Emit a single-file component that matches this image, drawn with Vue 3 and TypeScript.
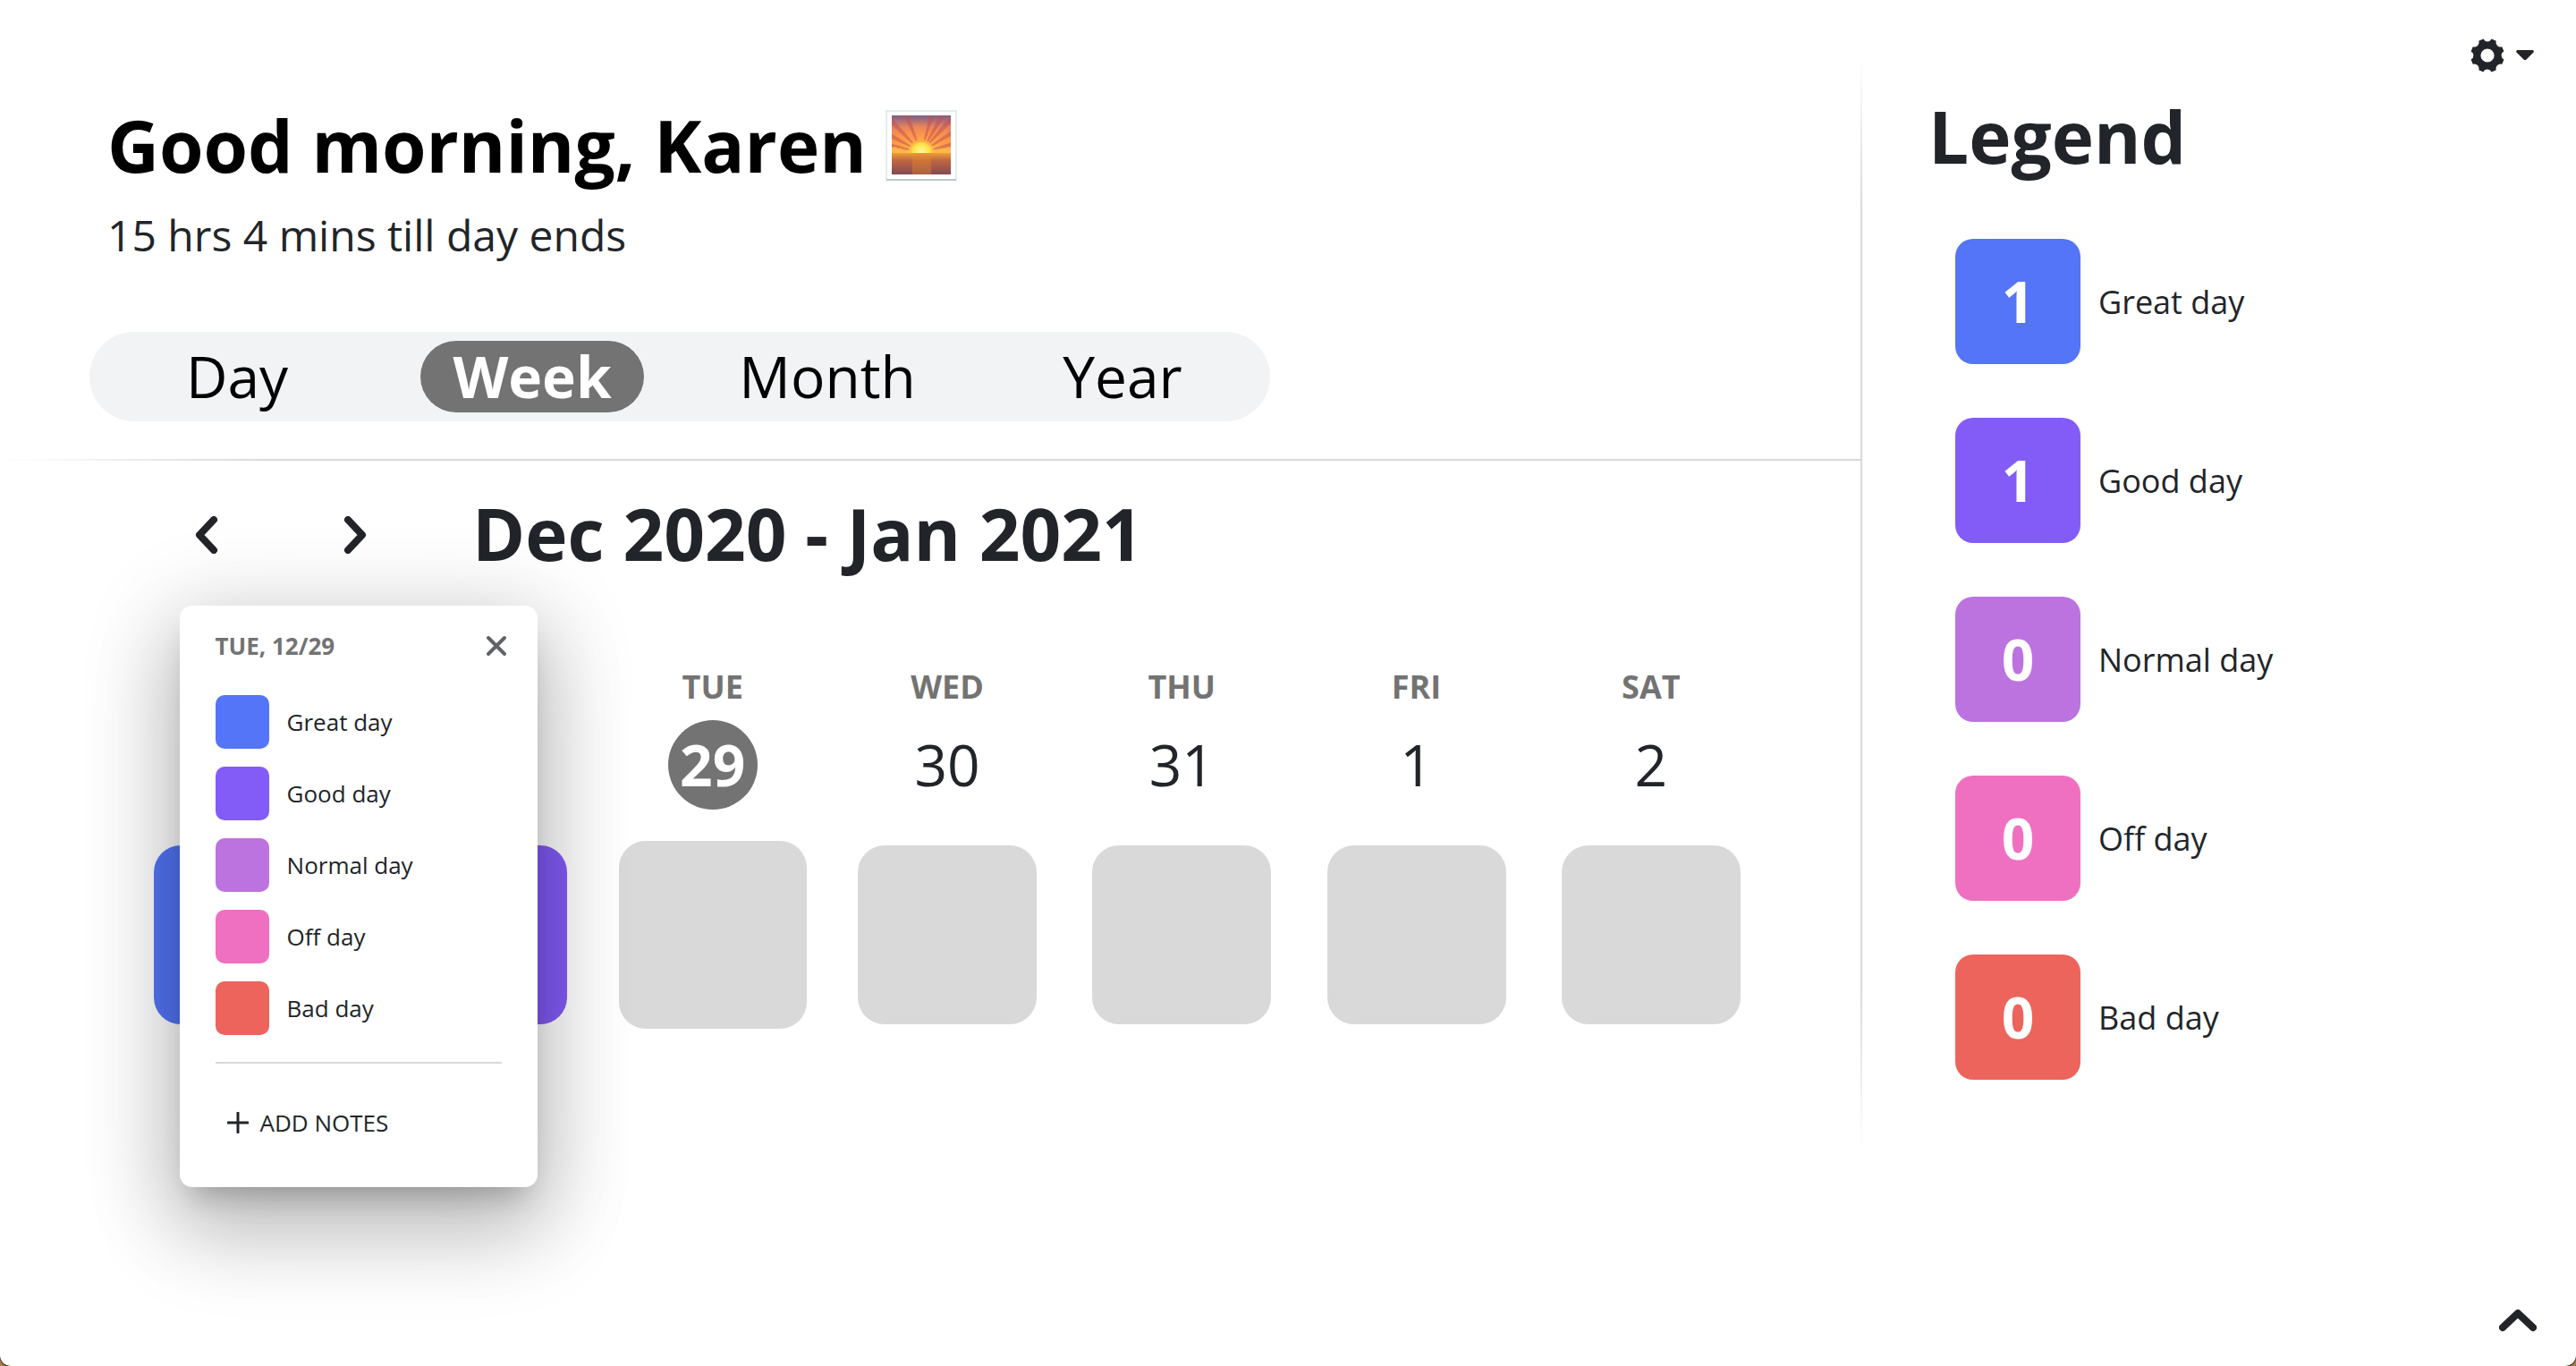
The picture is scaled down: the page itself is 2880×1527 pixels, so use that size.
<script setup lang="ts">
import { ref } from 'vue'

interface Mood {
  label: string
  color: string
  count: number
}

interface Day {
  name: string
  date: number
  color?: string
}

const moods: Mood[] = [
  { label: 'Great day', color: '#5475f7', count: 1 },
  { label: 'Good day', color: '#835cf7', count: 1 },
  { label: 'Normal day', color: '#bc73e0', count: 0 },
  { label: 'Off day', color: '#ef70c1', count: 0 },
  { label: 'Bad day', color: '#ed645d', count: 0 },
]

const days: Day[] = [
  { name: 'SUN', date: 27, color: '#5475f7' },
  { name: 'MON', date: 28, color: '#835cf7' },
  { name: 'TUE', date: 29 },
  { name: 'WED', date: 30 },
  { name: 'THU', date: 31 },
  { name: 'FRI', date: 1 },
  { name: 'SAT', date: 2 },
]

const views = ['Day', 'Week', 'Month', 'Year']
const view = ref('Week')
const selected = ref(29)
const open = ref(true)

// Eight-toothed cog: a scooped gap every 45 degrees, then a round hole.
function cogPath(): string {
  const at = (deg: number) => {
    const a = (deg * Math.PI) / 180
    return `${(20 + 20 * Math.sin(a)).toFixed(2)} ${(20 - 20 * Math.cos(a)).toFixed(2)}`
  }
  let d = `M${at(-14)}`
  for (let k = 0; k < 8; k++) {
    d += `A5.400 5.400 0 0 0 ${at(k * 45 + 14)}L${at(k * 45 + 31)}`
  }
  return d + 'ZM20 12a8 8 0 1 0 0 16a8 8 0 1 0 0-16Z'
}
const cog = cogPath()
const rays = [-78, -62, -44, -22, 16, 30, 42, 58, 76]
</script>

<template>
  <div class="page">
    <main class="tracker">
      <header class="greeting">
        <h1>
          Good morning, Karen
          <svg class="sunrise" viewBox="0 0 80 80" role="img" aria-label="Sunrise">
            <defs>
              <linearGradient id="sky" x1="0" y1="0" x2="0" y2="1">
                <stop offset="0" stop-color="#7d5f86" />
                <stop offset="0.3" stop-color="#e08062" />
                <stop offset="0.65" stop-color="#ff9448" />
                <stop offset="1" stop-color="#ffb637" />
              </linearGradient>
              <linearGradient id="sea" x1="0" y1="0" x2="0" y2="1">
                <stop offset="0" stop-color="#eda03a" />
                <stop offset="0.35" stop-color="#bf6641" />
                <stop offset="1" stop-color="#834a52" />
              </linearGradient>
              <radialGradient id="glow" cx="0.5" cy="1" r="0.85">
                <stop offset="0" stop-color="#ffe04a" />
                <stop offset="0.5" stop-color="#ff9f4a" stop-opacity="0.8" />
                <stop offset="1" stop-color="#ff8a4c" stop-opacity="0" />
              </radialGradient>
              <radialGradient id="sun" cx="0.5" cy="0.5" r="0.5">
                <stop offset="0" stop-color="#fffaa8" />
                <stop offset="1" stop-color="#fede35" />
              </radialGradient>
              <clipPath id="skyclip"><rect x="7" y="7" width="66" height="42" /></clipPath>
            </defs>
            <rect x="1" y="2" width="78" height="77" fill="#fff" stroke="#cbdada" />
            <rect x="1" y="78" width="78" height="2" fill="#b9c9c9" />
            <rect x="7" y="7" width="66" height="42" fill="url(#sky)" />
            <rect x="7" y="7" width="66" height="42" fill="url(#glow)" />
            <g clip-path="url(#skyclip)">
              <polygon
                v-for="r in rays"
                :key="r"
                points="39,34 41,34 43,-2 37,-2"
                fill="#c24c4f"
                opacity="0.5"
                :transform="`rotate(${r} 40 48)`"
              />
              <path d="M7 49v-6q4-2 7 1q5-1 8 5zM73 49v-6q-4-2-7 1q-5-1-8 5z" fill="#ffb84a" />
              <circle cx="40" cy="48" r="11" fill="url(#sun)" />
            </g>
            <rect x="7" y="49" width="66" height="24" fill="url(#sea)" />
            <rect x="30" y="49" width="21" height="24" fill="#e58a2c" opacity="0.4" />
          </svg>
        </h1>
        <p>15 hrs 4 mins till day ends</p>
      </header>

      <nav class="views">
        <div v-for="v in views" :key="v" class="view-slot">
          <button type="button" :class="['view', { active: v === view }]" @click="view = v">{{ v }}</button>
        </div>
      </nav>

      <div class="rule"></div>

      <div class="period">
        <button type="button" class="icon-button" aria-label="Previous week">
          <svg width="26" height="42" viewBox="0 0 26 42"><path class="chevron" d="M21 4L5 21l16 17" /></svg>
        </button>
        <button type="button" class="icon-button" aria-label="Next week">
          <svg width="26" height="42" viewBox="0 0 26 42"><path class="chevron" d="M5 4l16 17L5 38" /></svg>
        </button>
        <h2>Dec 2020 - Jan 2021</h2>
      </div>

      <section class="week">
        <div v-for="d in days" :key="d.name" class="day">
          <span class="day-name">{{ d.name }}</span>
          <span :class="['date', { today: d.date === 29 }]">{{ d.date }}</span>
          <div class="tile-slot">
            <button
              type="button"
              :class="['tile', { selected: d.date === selected }]"
              :style="d.color ? { backgroundColor: d.color } : undefined"
              :aria-label="`${d.name} ${d.date}`"
              @click="selected = d.date"
            ></button>
          </div>

          <div v-if="open && d.date === 29" class="popup" role="dialog" aria-label="Rate the day">
            <div class="popup-head">
              <strong>TUE, 12/29</strong>
              <button type="button" class="close" aria-label="Close" @click="open = false">
                <svg width="24" height="24" viewBox="0 0 24 24"><path d="M3 3l18 18M21 3L3 21" /></svg>
              </button>
            </div>
            <div class="choices">
              <button v-for="m in moods" :key="m.label" type="button" class="choice">
                <span class="swatch" :style="{ backgroundColor: m.color }"></span>
                {{ m.label }}
              </button>
            </div>
            <button type="button" class="notes">
              <svg width="24" height="24" viewBox="0 0 24 24"><path d="M12 1v22M1 12h22" /></svg>
              ADD NOTES
            </button>
          </div>
        </div>
      </section>
    </main>

    <aside class="side">
      <div class="toolbar">
        <button type="button" class="settings" aria-label="Settings">
          <svg width="38" height="38" viewBox="0 0 40 40"><path :d="cog" fill-rule="evenodd" /></svg>
          <svg width="20" height="12" viewBox="0 0 20 12"><path d="M1.500 0h17q2 .5 1 2.500l-8 8q-1.500 1.500-3 0l-8-8q-1-2 1-2.500z" /></svg>
        </button>
      </div>
      <h2>Legend</h2>
      <ul class="legend">
        <li v-for="m in moods" :key="m.label">
          <span class="count" :style="{ backgroundColor: m.color }">{{ m.count }}</span>
          {{ m.label }}
        </li>
      </ul>
    </aside>

    <button type="button" class="icon-button to-top" aria-label="Back to top">
      <svg width="42" height="26" viewBox="0 0 42 26"><path class="chevron" d="M4 21L21 5l17 16" /></svg>
    </button>
  </div>
</template>

<style>
body {
  margin: 0;
  background: #a87c45;
}
</style>

<style scoped>
.page {
  display: grid;
  grid-template-columns: minmax(0, 1fr) 800px;
  align-items: start;
  box-sizing: border-box;
  min-height: 100vh;
  background: #fff;
  border-radius: 0 0 12px 12px;
  box-shadow: 0 0 0 1px #3d2f1c;
  color: #212529;
  font-family: 'Open Sans', 'Noto Sans', sans-serif;
}

button {
  margin: 0;
  padding: 0;
  border: 0;
  background: none;
  color: inherit;
  font: inherit;
  cursor: pointer;
}

h1,
h2,
p,
ul {
  margin: 0;
  padding: 0;
}

svg {
  display: block;
}

h1,
h2 {
  font-size: 80px;
  line-height: 96px;
  font-weight: 700;
}

.greeting {
  padding: 114px 120px 0;
}

.greeting h1 {
  display: flex;
  align-items: center;
  gap: 21px;
  color: #000;
}

.sunrise {
  width: 80px;
  height: 80px;
}

.greeting p {
  margin-top: 21px;
  font-size: 48px;
  line-height: 64px;
}

.views {
  display: grid;
  grid-template-columns: repeat(4, 1fr);
  align-items: center;
  max-width: 1320px;
  height: 100px;
  margin: 76px 100px 42px;
  border-radius: 50px;
  background: #f1f3f5;
}

.view-slot {
  display: flex;
  justify-content: center;
}

.view {
  min-width: 250px;
  height: 80px;
  border-radius: 40px;
  color: #000;
  font-size: 64px;
  line-height: 80px;
}

.view.active {
  background: #737373;
  color: #fff;
  font-weight: 700;
}

.rule {
  height: 2px;
  background: linear-gradient(to right, transparent, #d8d8d8 15%);
}

.period {
  display: flex;
  align-items: flex-end;
  height: 96px;
  margin-top: 33px;
  padding-left: 191px;
}

.icon-button {
  display: flex;
  align-items: center;
  justify-content: center;
  width: 80px;
  height: 92px;
}

.icon-button + .icon-button {
  margin: 0 91px 0 86px;
}

.chevron {
  fill: none;
  stroke: #212529;
  stroke-width: 8;
  stroke-linecap: round;
  stroke-linejoin: round;
}

.week {
  display: grid;
  grid-template-columns: repeat(7, 1fr);
  margin: 100px 103px 0 141px;
}

.day {
  position: relative;
  display: flex;
  flex-direction: column;
  align-items: center;
}

.day-name {
  color: #737373;
  font-size: 36px;
  line-height: 48px;
  font-weight: 700;
}

.date {
  width: 100px;
  margin: 13px 0 35px;
  border-radius: 50%;
  font-size: 64px;
  line-height: 100px;
  text-align: center;
}

.date.today {
  background: #737373;
  color: #fff;
  font-weight: 700;
}

.tile-slot {
  display: flex;
  align-items: center;
  height: 210px;
}

.tile {
  width: 200px;
  height: 200px;
  border-radius: 30px;
  background: #d9d9d9;
}

.tile.selected {
  width: 210px;
  height: 210px;
}

.popup {
  position: absolute;
  z-index: 2;
  top: -67px;
  right: calc(100% + 65px);
  box-sizing: border-box;
  width: 400px;
  padding: 20px 40px 48px;
  border-radius: 14px;
  background: #fff;
  box-shadow:
    0 48px 96px 6px rgba(0, 0, 0, 0.18),
    0 18px 100px 16px rgba(0, 0, 0, 0.14),
    0 22px 30px -14px rgba(0, 0, 0, 0.22);
  font-size: 26px;
  line-height: 48px;
}

.popup-head {
  display: flex;
  align-items: center;
  justify-content: space-between;
  height: 50px;
  margin-right: -16px;
  color: #737373;
}

.close {
  display: flex;
  align-items: center;
  justify-content: center;
  width: 44px;
  height: 44px;
}

.popup path {
  fill: none;
  stroke: #212529;
  stroke-width: 3;
  stroke-linecap: round;
}

.popup .close path {
  stroke: #5f6368;
  stroke-width: 4;
}

.choices {
  display: flex;
  flex-direction: column;
  gap: 20px;
  padding: 30px 0;
  border-bottom: 2px solid #d8d8d8;
}

.choice {
  display: flex;
  align-items: center;
  gap: 20px;
  height: 60px;
}

.swatch {
  width: 60px;
  height: 60px;
  border-radius: 10px;
}

.notes {
  display: flex;
  align-items: center;
  gap: 13px;
  margin-top: 42px;
  padding: 0 13px;
  height: 48px;
}

.side {
  box-sizing: border-box;
  margin-top: 36px;
  padding-left: 76px;
  min-height: 1264px;
  background: linear-gradient(transparent 2%, #d8d8d8 16%, #d8d8d8 84%, transparent 99%) left / 2px 100% no-repeat;
}

.toolbar {
  display: flex;
  justify-content: flex-end;
  padding-right: 47px;
}

.settings {
  display: flex;
  align-items: center;
  gap: 13px;
  height: 52px;
  fill: #212529;
}

.side h2 {
  margin-top: 16px;
}

.legend {
  display: flex;
  flex-direction: column;
  gap: 60px;
  margin: 67px 0 0 30px;
  list-style: none;
  font-size: 36px;
}

.legend li {
  display: flex;
  align-items: center;
  gap: 20px;
}

.count {
  width: 140px;
  border-radius: 20px;
  color: #fff;
  font-size: 64px;
  line-height: 140px;
  font-weight: 700;
  text-align: center;
}

.icon-button.to-top {
  position: fixed;
  right: 25px;
  bottom: 5px;
  margin: 0;
}
</style>
